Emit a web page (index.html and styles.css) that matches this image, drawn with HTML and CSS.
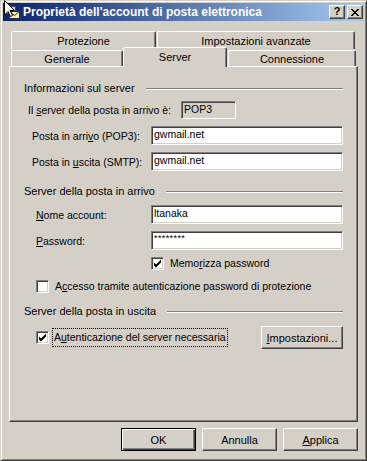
FILE: index.html
```html
<!DOCTYPE html>
<html lang="it">

<head>
    <meta charset="UTF-8">
    <title>Proprietà dell'account di posta elettronica</title>
    <link rel="stylesheet" href="styles.css">
</head>

<body>
    <div class="window">
        <!-- mouse pointer sitting over the caption icon -->
        <svg class="cursor" width="13" height="18" viewBox="0 0 13 18">
            <polygon points="0.5,0.5 0.5,15 4,11.5 6.5,16.5 8.5,15.5 6,10.5 10.5,10.5" fill="#fff" stroke="#000" stroke-width="1" />
        </svg>

        <div class="titlebar">
            <svg class="app-icon" width="16" height="16" viewBox="0 0 16 16">
                <rect x="1.5" y="2.5" width="9" height="7" fill="#c8d0e0" stroke="#404858" />
                <rect x="4.5" y="7.5" width="10" height="7" fill="#f8ecb0" stroke="#303030" />
                <polyline points="4.5,7.5 9.5,11.5 14.5,7.5" fill="none" stroke="#303030" />
            </svg>
            <span class="title">Proprietà dell'account di posta elettronica</span>
            <div class="caption-buttons">
                <button class="cap-btn help">?</button>
                <button class="cap-btn">
                    <svg width="8" height="7" viewBox="0 0 8 7">
                        <path d="M0 0 L7 7 M1 0 L8 7 M7 0 L0 7 M8 0 L1 7" stroke="#000" stroke-width="1" />
                    </svg>
                </button>
            </div>
        </div>

        <div class="dialog">
            <div class="tabs">
                <div class="tab-row back">
                    <div class="tab tab-protezione">Protezione</div>
                    <div class="tab tab-avanzate">Impostazioni avanzate</div>
                </div>
                <div class="tab-row front">
                    <div class="tab tab-generale">Generale</div>
                    <div class="tab tab-server active">Server</div>
                    <div class="tab tab-connessione">Connessione</div>
                </div>
            </div>

            <div class="panel">
                <div class="group-head"><span>Informazioni sul server</span><i class="rule"></i></div>

                <div class="row first">
                    <label class="label wide indent-4">Il <u>s</u>erver della posta in arrivo è:</label>
                    <div class="field readonly">POP3</div>
                </div>
                <div class="row">
                    <label class="label indent-8">Posta in arri<u>v</u>o (POP3):</label>
                    <div class="field">gwmail.net</div>
                </div>
                <div class="row">
                    <label class="label indent-8">Posta in <u>u</u>scita (SMTP):</label>
                    <div class="field">gwmail.net</div>
                </div>

                <div class="group-head second"><span>Server della posta in arrivo</span><i class="rule"></i></div>

                <div class="row">
                    <label class="label indent-12"><u>N</u>ome account:</label>
                    <div class="field">ltanaka</div>
                </div>
                <div class="row">
                    <label class="label indent-12"><u>P</u>assword:</label>
                    <div class="field password">********</div>
                </div>
                <div class="check-row remember">
                    <span class="checkbox checked"></span>
                    <span>Memo<u>r</u>izza password</span>
                </div>
                <div class="check-row secure">
                    <span class="checkbox"></span>
                    <span>A<u>c</u>cesso tramite autenticazione password di protezione</span>
                </div>

                <div class="group-head third"><span>Server della posta in uscita</span><i class="rule"></i></div>

                <div class="check-row outgoing">
                    <span class="checkbox checked"></span>
                    <span class="focus">A<u>u</u>tenticazione del server necessaria</span>
                    <button class="btn settings"><u>I</u>mpostazioni...</button>
                </div>
            </div>

            <div class="dialog-buttons">
                <button class="btn default">OK</button>
                <button class="btn">Annulla</button>
                <button class="btn"><u>A</u>pplica</button>
            </div>
        </div>
    </div>
</body>

</html>
```

FILE: styles.css
```css
/* Reset */
* {
    margin: 0;
    padding: 0;
    box-sizing: border-box;
}

body {
    background: #d4d0c8;
    font-family: "Liberation Sans", Arial, sans-serif;
    font-size: 10.5px;
    color: #000;
}

u {
    text-decoration: underline;
    text-underline-offset: 1px;
}

/* Window frame */
.window {
    position: relative;
    width: 367px;
    height: 461px;
    padding: 2px;
    background: #d4d0c8;
    border: 1px solid;
    border-color: #d4d0c8 #404040 #404040 #d4d0c8;
    box-shadow: inset 1px 1px #fff, inset -1px -1px #808080;
}

.cursor {
    position: absolute;
    left: 3px;
    top: -1px;
    z-index: 5;
}

/* Caption */
.titlebar {
    display: flex;
    align-items: center;
    height: 18px;
    padding: 0 1px 0 2px;
    background: linear-gradient(to right, #0a246a, #a6caf0);
}

.app-icon {
    margin-right: 2px;
}

.title {
    color: #fff;
    font-weight: 700;
    font-size: 12px;
    white-space: nowrap;
}

.caption-buttons {
    display: flex;
    gap: 2px;
    margin-left: auto;
}

.cap-btn {
    display: flex;
    align-items: center;
    justify-content: center;
    width: 16px;
    height: 14px;
    background: #d4d0c8;
    border: 1px solid;
    border-color: #fff #404040 #404040 #fff;
    box-shadow: inset -1px -1px #808080;
    font-family: "Liberation Sans", Arial, sans-serif;
    font-weight: 700;
    font-size: 11px;
    line-height: 1;
}

.cap-btn.help {
    padding-bottom: 1px;
}

/* Dialog body */
.dialog {
    padding: 10px 6px 0;
}

/* Tabs */
.tab-row {
    display: flex;
    padding-left: 2px;
    font-size: 11px;
}

.tab-row.back {
    height: 18px;
}

.tab-row.front {
    height: 17px;
}

.tab {
    display: flex;
    align-items: center;
    justify-content: center;
    background: #d4d0c8;
    border-top: 1px solid #fff;
    border-left: 1px solid #fff;
    border-right: 1px solid #404040;
    box-shadow: inset -1px 0 #808080;
    border-radius: 2px 2px 0 0;
    white-space: nowrap;
}

.back .tab {
    height: 18px;
}

.tab-protezione {
    width: 145px;
    margin-right: 1px;
}

.tab-avanzate {
    width: 198px;
}

.front .tab {
    height: 16px;
    margin-top: 1px;
}

.tab-generale {
    width: 112px;
}

.tab-connessione {
    width: 128px;
    margin-left: 1px;
}

.front .tab.active {
    position: relative;
    z-index: 1;
    width: 104px;
    height: 20px;
    margin-top: -2px;
    padding-bottom: 2px;
}

/* Tab page */
.panel {
    position: relative;
    height: 356px;
    padding: 15px 14px 0;
    border: 1px solid;
    border-color: #fff #404040 #404040 #fff;
    box-shadow: inset -1px -1px #808080;
}

.group-head {
    display: flex;
    align-items: center;
    gap: 11px;
    height: 13px;
    line-height: 13px;
    font-size: 11px;
}

.group-head.second {
    margin-top: 14px;
}

.group-head.third {
    margin-top: 12px;
}

.group-head .rule {
    flex: 1;
    height: 2px;
    border-top: 1px solid #808080;
    border-bottom: 1px solid #fff;
}

.row {
    display: flex;
    align-items: center;
    margin-top: 7px;
}

.row.first {
    margin-top: 6px;
}

.label {
    width: 127px;
    white-space: nowrap;
}

.label.wide {
    width: 157px;
}

.indent-4 {
    padding-left: 4px;
}

.indent-8 {
    padding-left: 8px;
}

.indent-12 {
    padding-left: 12px;
}

.field {
    flex: 1;
    height: 19px;
    padding: 0 2px;
    line-height: 15px;
    background: #fff;
    border: 1px solid;
    border-color: #808080 #fff #fff #808080;
    box-shadow: inset 1px 1px #404040, inset -1px -1px #d4d0c8;
    white-space: nowrap;
}

.field.readonly {
    flex: none;
    width: 55px;
    height: 18px;
    line-height: 14px;
    background: #d4d0c8;
}

.field.password {
    font-size: 9px;
    letter-spacing: 0.4px;
    line-height: 13px;
}

/* Checkboxes */
.check-row {
    display: flex;
    align-items: center;
    gap: 6px;
    line-height: 13px;
}

.check-row.remember {
    margin-top: 7px;
    padding-left: 127px;
}

.check-row.secure {
    margin-top: 10px;
    padding-left: 12px;
}

.check-row.outgoing {
    margin-top: 8px;
    padding-left: 12px;
    gap: 3px;
}

.checkbox {
    flex: none;
    width: 13px;
    height: 13px;
    background: #fff;
    border: 1px solid;
    border-color: #808080 #fff #fff #808080;
    box-shadow: inset 1px 1px #404040, inset -1px -1px #d4d0c8;
}

.checkbox.checked {
    background: #fff url("data:image/svg+xml;utf8,<svg xmlns='http://www.w3.org/2000/svg' width='11' height='11' viewBox='0 0 11 11'><path d='M2 4.5 L4 6.5 L9 1.5 L9 4.5 L4 9.5 L2 7.5 Z' fill='black'/></svg>") no-repeat 0 0;
}

.focus {
    padding: 2px 1px;
    border: 1px dotted #000;
}

/* Push buttons */
.btn {
    width: 75px;
    height: 23px;
    background: #d4d0c8;
    border: 1px solid;
    border-color: #fff #404040 #404040 #fff;
    box-shadow: inset -1px -1px #808080;
    font-family: "Liberation Sans", Arial, sans-serif;
    font-size: 11px;
    color: #000;
}

.btn.default {
    border-color: #000;
    box-shadow: inset 1px 1px #fff, inset -1px -1px #404040, inset -2px -2px #808080;
}

.btn.settings {
    width: 82px;
    margin-left: auto;
}

.dialog-buttons {
    display: flex;
    justify-content: flex-end;
    gap: 6px;
    margin-top: 6px;
}
```
